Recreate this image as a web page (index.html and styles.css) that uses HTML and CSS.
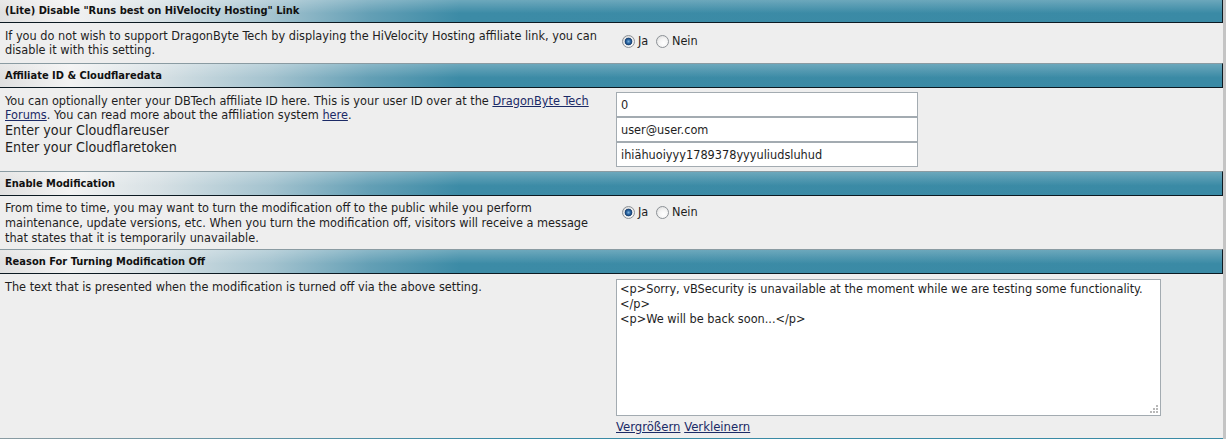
FILE: index.html
```html
<!DOCTYPE html>
<html lang="de">
<head>
  <meta charset="UTF-8">
  <title>vBSecurity Optionen</title>
  <link rel="stylesheet" href="styles.css">
</head>
<body>
  <div class="settings">
    <div class="head first">(Lite) Disable "Runs best on HiVelocity Hosting" Link</div>
    <div class="row">
      <div class="desc">If you do not wish to support DragonByte Tech by displaying the HiVelocity Hosting affiliate link, you can disable it with this setting.</div>
      <div class="ctl radios">
        <label><input type="radio" name="hivelocity" checked>Ja</label>
        <label><input type="radio" name="hivelocity">Nein</label>
      </div>
    </div>

    <div class="head">Affiliate ID &amp; Cloudflaredata</div>
    <div class="row">
      <div class="desc">
        You can optionally enter your DBTech affiliate ID here. This is your user ID over at the <a href="#">DragonByte Tech Forums</a>. You can read more about the affiliation system <a href="#">here</a>.
        <div class="big">Enter your Cloudflareuser</div>
        <div class="big">Enter your Cloudflaretoken</div>
      </div>
      <div class="ctl inputs">
        <input type="text" value="0">
        <input type="text" value="user@user.com">
        <input type="text" value="ihiähuoiyyy1789378yyyuliudsluhud">
      </div>
    </div>

    <div class="head">Enable Modification</div>
    <div class="row">
      <div class="desc tall">From time to time, you may want to turn the modification off to the public while you perform maintenance, update versions, etc. When you turn the modification off, visitors will receive a message that states that it is temporarily unavailable.</div>
      <div class="ctl radios low">
        <label><input type="radio" name="active" checked>Ja</label>
        <label><input type="radio" name="active">Nein</label>
      </div>
    </div>

    <div class="head">Reason For Turning Modification Off</div>
    <div class="row">
      <div class="desc">The text that is presented when the modification is turned off via the above setting.</div>
      <div class="ctl">
        <div class="textbox">
          <textarea>&lt;p&gt;Sorry, vBSecurity is unavailable at the moment while we are testing some functionality.&lt;/p&gt;
&lt;p&gt;We will be back soon...&lt;/p&gt;</textarea>
          <svg class="grip" width="9" height="9" viewBox="0 0 9 9">
            <rect x="7" y="1" width="2" height="2" fill="#b8b8b8"/>
            <rect x="4" y="4" width="2" height="2" fill="#b8b8b8"/>
            <rect x="7" y="4" width="2" height="2" fill="#b8b8b8"/>
            <rect x="1" y="7" width="2" height="2" fill="#b8b8b8"/>
            <rect x="4" y="7" width="2" height="2" fill="#b8b8b8"/>
            <rect x="7" y="7" width="2" height="2" fill="#b8b8b8"/>
          </svg>
        </div>
        <div class="resize-links"><a href="#">Vergrößern</a> <a href="#">Verkleinern</a></div>
      </div>
    </div>
    <div class="foot"></div>
  </div>
</body>
</html>
```

FILE: styles.css
```css
html, body {
  margin: 0;
  padding: 0;
  overflow: hidden;
}
body {
  background: #eeeeee;
  font-family: "DejaVu Sans Condensed", "Liberation Sans", sans-serif;
  font-size: 12.6px;
  color: #1e1e1e;
}
.settings {
  border-right: 3px solid #c4c4c4;
}
.head {
  height: 23px;
  line-height: 23px;
  padding-left: 5px;
  font-size: 11px;
  font-weight: bold;
  color: #111;
  border-top: 1px solid #8a9ba2;
  border-bottom: 1px solid #0c1a22;
  border-right: 1px solid #0c1a22;
  background:
    linear-gradient(to bottom, rgba(255, 255, 255, 0.25), rgba(255, 255, 255, 0) 60%),
    linear-gradient(to right, #e0e0e0 0, #f2f2f2 70px, #d6e0e4 160px, #a4c3cf 270px, #639fb5 370px, #3c8ba6 460px, #3a8aa5 100%);
}
.head.first {
  border-top: none;
  height: 22px;
  line-height: 22px;
}
.row {
  display: grid;
  grid-template-columns: 611px 1fr;
}
.desc {
  padding: 6px 5px;
  line-height: 14px;
}
.desc.tall {
  padding: 4px 5px;
  line-height: 15px;
}
.big {
  font-size: 14.2px;
  line-height: 17px;
}
a {
  color: #1b2a66;
}
.ctl {
  padding: 4px 0 4px 5px;
}
.radios {
  padding-top: 10px;
}
.radios.low {
  padding-top: 8px;
}
.radios input {
  appearance: none;
  box-sizing: border-box;
  margin: 0 3px 0 4px;
  width: 13px;
  height: 13px;
  vertical-align: -3px;
  border: 1px solid #8c9196;
  border-radius: 50%;
  background: radial-gradient(circle at 60% 65%, #ffffff 0, #f4f4f4 45%, #d6d6d6 100%);
}
.radios input:checked {
  background:
    radial-gradient(circle at 50% 50%, #7fb2dc 0, #2b66a3 2px, #173e6e 3.5px, rgba(0, 0, 0, 0) 4.2px),
    radial-gradient(circle at 60% 65%, #ffffff 0, #f0f0f0 45%, #cfcfcf 100%);
}
.radios label:first-child input {
  margin-left: 6px;
}
.inputs input {
  display: block;
  box-sizing: border-box;
  width: 302px;
  height: 25px;
  margin: 0;
  padding: 0 4px;
  border: 1px solid #a3abb1;
  background: #fff;
  font-family: inherit;
  font-size: 12.6px;
  color: #1e1e1e;
}
.textbox {
  position: relative;
  width: 545px;
}
textarea {
  display: block;
  box-sizing: border-box;
  width: 545px;
  height: 137px;
  margin: 1px 0 0;
  padding: 1px 3px;
  border: 1px solid #a3abb1;
  background: #fff;
  font-family: inherit;
  font-size: 12.6px;
  line-height: 15px;
  color: #1e1e1e;
  resize: none;
  overflow: hidden;
}
.grip {
  position: absolute;
  right: 3px;
  bottom: 3px;
}
.resize-links {
  padding-top: 3px;
  font-size: 13px;
  line-height: 15px;
}
.foot {
  height: 2px;
  background: linear-gradient(to right, #8a9ba2, #3a8aa5 500px);
}
```
